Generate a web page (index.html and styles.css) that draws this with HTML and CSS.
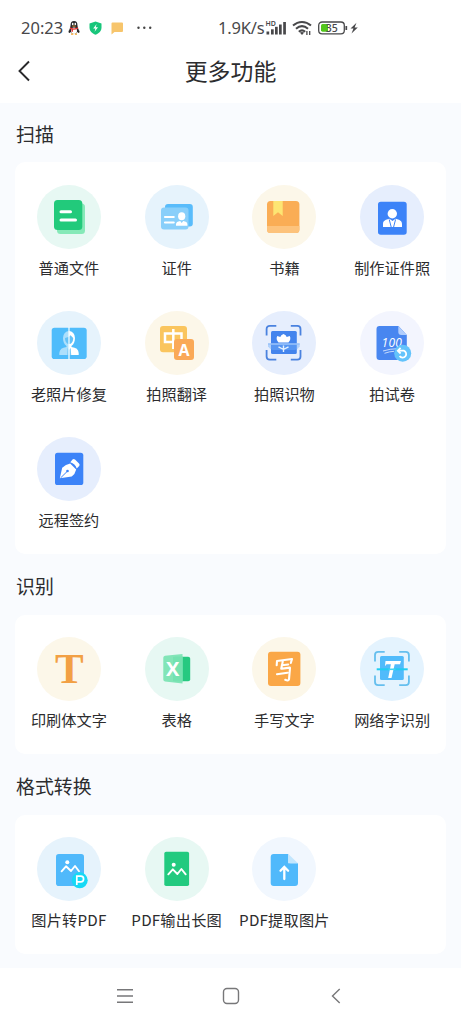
FILE: index.html
```html
<!DOCTYPE html>
<html lang="zh-CN">
<head>
<meta charset="utf-8">
<meta name="viewport" content="width=device-width, initial-scale=1">
<title>更多功能</title>
<link rel="stylesheet" href="styles.css">
</head>
<body>
<div class="screen">
  <div class="status">
    <span class="clock">20:23</span>
    <svg class="tray" width="90" height="16" viewBox="0 0 90 16">
      <path d="M2 9.500C.8 11 .7 13 1.500 12.500L3 11M10 9.500c1.300 1.500 1.400 3.500.6 3L9 11" fill="#222" stroke="#222" stroke-width="1"/>
      <ellipse cx="6" cy="9.500" rx="4.400" ry="4.600" fill="#292a2d"/>
      <ellipse cx="6" cy="5.300" rx="3.500" ry="4.300" fill="#292a2d"/>
      <ellipse cx="6" cy="10.800" rx="3" ry="3.300" fill="#fff"/>
      <ellipse cx="4.700" cy="4" rx=".8" ry="1.200" fill="#fff"/><ellipse cx="7.300" cy="4" rx=".8" ry="1.200" fill="#fff"/>
      <path d="M4 5.900q2-.6 4 0-2 1.300-4 0" fill="#f6a52c"/>
      <path d="M3 14.200h2.300M6.900 14.200H9" stroke="#f6a52c" stroke-width="1.300"/>
      <path d="M2 7.300q4 2.200 8 0v1.500q-3 1.300-5 1v2H3.500V9.500L2 8.900z" fill="#e43936"/>
      <path d="M27.500 1.500l6 2v4c0 3.500-2.500 5.800-6 7.200-3.500-1.400-6-3.700-6-7.200v-4z" fill="#18c67b"/>
      <path d="M28.600 4l-3.400 4.400h2.200l-.8 3.300 3.400-4.500h-2.300z" fill="#fff"/>
      <path d="M44.500 2.500H54a1 1 0 0 1 1 1V11a1 1 0 0 1-1 1h-7.500l-3 2.400V3.500a1 1 0 0 1 1-1z" fill="#f7c56c"/>
      <g fill="#444"><circle cx="70.500" cy="7.800" r="1.200"/><circle cx="76.300" cy="7.800" r="1.200"/><circle cx="82.200" cy="7.800" r="1.200"/></g>
    </svg>
    <span class="speed">1.9K/s</span>
    <svg class="radio" width="98" height="16" viewBox="0 0 98 16">
      <text x=".5" y="6" class="hd">HD</text>
      <g fill="#48484a"><rect x="1.500" y="11.500" width="2.700" height="3"/><rect x="6" y="9.300" width="2.700" height="5.200"/><rect x="10" y="6.800" width="2.700" height="7.700"/><rect x="14" y="4.500" width="2.700" height="10"/><rect x="18.200" y="2" width="2.700" height="12.500"/></g>
      <g fill="none" stroke="#48484a" stroke-width="2"><path d="M28 5.600c5.500-4.900 12.500-4.900 18 0M31 8.800c3.700-3.300 8.300-3.300 12 0M33.800 11.700q3.200-2.600 6.400 0"/></g>
      <path d="M34.800 12.600q2.200-1.400 4.400 0L37 15z" fill="#48484a"/>
      <path d="M41.900 15v-4M44.700 11v4" stroke="#48484a" stroke-width="1.300"/>
      <rect x="53.700" y="2" width="25.600" height="11.800" rx="3.400" fill="#fff" stroke="#48484a" stroke-width="1.300"/>
      <path d="M57.500 4H63v7.800h-5.500A1.700 1.700 0 0 1 56 10.200V5.600A1.700 1.700 0 0 1 57.500 4z" fill="#52c51b"/>
      <path d="M81.300 6v4" stroke="#48484a" stroke-width="1.700"/>
      <text x="60.800" y="11.500" class="level">35</text>
      <path d="M91.500 2.800l-6 5.700h3l-2 5 6.300-6h-3.200z" fill="#48484a"/>
    </svg>
  </div>

  <header class="header">
    <svg class="back" width="14" height="22" viewBox="0 0 14 22"><path d="M12 1.500L2.500 11l9.500 9.500" fill="none" stroke="#29292b" stroke-width="1.900"/></svg>
    <h1>更多功能</h1>
  </header>

  <main class="content">
    <h2>扫描</h2>
    <section class="card card-scan">
      <div class="item">
        <svg class="icon" viewBox="0 0 64 64"><circle cx="32" cy="32" r="32" fill="#e7f8f3"/>
          <rect x="20" y="18.500" width="28" height="30.500" rx="3.500" fill="#86e9b8"/><rect x="17" y="15" width="28.300" height="30" rx="3.500" fill="#22ca7b"/>
          <path d="M24 26.700h9.500M24 35h14.500" stroke="#fff" stroke-width="3" stroke-linecap="round"/></svg>
        <span>普通文件</span>
      </div>
      <div class="item">
        <svg class="icon" viewBox="0 0 64 64"><circle cx="32" cy="32" r="32" fill="#e6f3fc"/>
          <rect x="20" y="19" width="27.800" height="22.500" rx="3" fill="#59bcfb"/><rect x="16" y="22.500" width="27.500" height="22" rx="3" fill="#89cffa"/>
          <path d="M20 32h8.700M20 37.500h8.700" stroke="#fff" stroke-width="2.200" stroke-linecap="round"/>
          <ellipse cx="36.700" cy="31.300" rx="3.600" ry="4" fill="#fff"/><path d="M31 40.800v-1.500q.2-2.800 4.200-3.300l1.500 2 1.500-2q4 .5 4.200 3.300v1.500z" fill="#fff"/></svg>
        <span>证件</span>
      </div>
      <div class="item">
        <svg class="icon" viewBox="0 0 64 64"><circle cx="32" cy="32" r="32" fill="#fcf7e9"/>
          <rect x="15" y="16" width="32.400" height="32" rx="3.500" fill="#faad55"/><path d="M15 41h32.400v3.500a3.500 3.500 0 0 1-3.500 3.500H18.500a3.500 3.500 0 0 1-3.500-3.500z" fill="#fdc37c"/>
          <path d="M21.300 16h9.400v15L26 27.200 21.300 31z" fill="#fde573"/></svg>
        <span>书籍</span>
      </div>
      <div class="item">
        <svg class="icon" viewBox="0 0 64 64"><circle cx="32" cy="32" r="32" fill="#e6eefd"/>
          <rect x="18" y="16.800" width="28.700" height="33" rx="2.800" fill="#3c83f8"/><circle cx="32.300" cy="28.800" r="4.700" fill="#fff"/>
          <path d="M23 42v-3c0-3.500 3-4.500 6.500-5.300L32.500 36l3-2.300C39 34.500 42 35.500 42 39v3z" fill="#fff"/><path d="M29.200 34.400l2 7.600M35.600 34.400l-2 7.600" stroke="#3c83f8" stroke-width="1"/></svg>
        <span>制作证件照</span>
      </div>
      <div class="item">
        <svg class="icon" viewBox="0 0 64 64"><circle cx="32" cy="32" r="32" fill="#e6f3fc"/>
          <rect x="14.700" y="16.700" width="35" height="31.300" rx="2.800" fill="#4fbcfb"/>
          <path d="M32 20a6 7 0 0 0-6 7c0 3 1 6.500 3.500 8v1q-6.800.7-7.200 6v2H32z" fill="#acdffc"/><path d="M32 20a6 7 0 0 1 6 7c0 3-1 6.500-3.500 8v1q7 .7 7.200 6v2H32z" fill="#fff"/>
          <path d="M28 27q4-.5 5.500-2.800L36.200 27c0 8-8 8-8.200 0z" fill="#65c2f7"/><path d="M30.500 37l1.500 2 1.700-2 .5 7h-4z" fill="#78c9f8"/>
          <path d="M32 16v33" stroke="#eefaff" stroke-width="1.300"/></svg>
        <span>老照片修复</span>
      </div>
      <div class="item">
        <svg class="icon" viewBox="0 0 64 64"><circle cx="32" cy="32" r="32" fill="#fcf7e9"/>
          <rect x="15" y="15" width="27" height="26.300" rx="3" fill="#fac55e"/><path d="M20 22.500h16.500v8.500H20zM28.300 18v20" fill="none" stroke="#fff" stroke-width="2.500"/>
          <rect x="29" y="28" width="20" height="21" rx="3" fill="#faa957"/><text x="39" y="44.500" class="letter-a">A</text></svg>
        <span>拍照翻译</span>
      </div>
      <div class="item">
        <svg class="icon" viewBox="0 0 64 64"><circle cx="32" cy="32" r="32" fill="#e6eefd"/>
          <path d="M14.600 24.500V18a3.200 3.200 0 0 1 3.200-3.200h6.500M38.800 14.800h6.500a3.200 3.200 0 0 1 3.200 3.200v6.500M48.500 39v6.500a3.200 3.200 0 0 1-3.200 3.200h-6.500M24.300 48.700h-6.500a3.200 3.200 0 0 1-3.200-3.200V39" fill="none" stroke="#4a82df" stroke-width="1.800"/>
          <rect x="19" y="20" width="25.800" height="23" rx="1.500" fill="#4384ed"/>
          <path d="M26.500 31.500q-3-3.500-1.200-6.500l3 1q.5-2 3.200-3 2.700 1 3.200 3l3-1q1.800 3-1.200 6.500z" fill="#fff"/>
          <path d="M16 33h31.700v2.500q-2 3-5 3.500H21q-3-.5-5-3.500z" fill="#70acf8" opacity=".45"/><path d="M16 33h31.700" stroke="#99c2f9" stroke-width="1.600"/>
          <path d="M31.500 34.500V41M31.500 38.500l-5-2.700M31.500 38.500l5-2.700" stroke="#e5f1ff" stroke-width="1.400"/></svg>
        <span>拍照识物</span>
      </div>
      <div class="item">
        <svg class="icon" viewBox="0 0 64 64"><circle cx="32" cy="32" r="32" fill="#f3f5fe"/>
          <path d="M19.500 15h19l8.300 9v22a3 3 0 0 1-3 3H19.500a3 3 0 0 1-3-3V18a3 3 0 0 1 3-3z" fill="#4886f0"/><path d="M38.300 15v6a3 3 0 0 0 3 3h5.500z" fill="#b1cdfc"/>
          <text x="21.500" y="35.500" class="score">100</text><path d="M23 40q7-2.300 15-2.300M24.500 42.300q5-1.800 9.500-2" stroke="#e8f1ff" stroke-width=".8" fill="none"/>
          <circle cx="42.700" cy="42.300" r="8.500" fill="#63c3fb"/><path d="M38.300 39.700h5.500a3.600 3.600 0 1 1-4.200 5.400M40.600 36.900l-2.800 2.800 2.800 2.800" fill="none" stroke="#fff" stroke-width="1.800"/></svg>
        <span>拍试卷</span>
      </div>
      <div class="item">
        <svg class="icon" viewBox="0 0 64 64"><circle cx="32" cy="32" r="32" fill="#e6eefd"/>
          <rect x="18" y="15.800" width="28.300" height="32.200" rx="2.600" fill="#3c83f8"/>
          <path d="M22.800 41.300l2.400-10.500q3.500-3.500 8-4.300l6 6q-1 4.500-4.500 7z" fill="#fff"/><path d="M33.300 25.200l2.200-2.700q1.200-1.200 2.500 0l4 4q1.200 1.200.2 2.500l-2.500 2.500q-1.500-4.800-6.400-6.300z" fill="#fff"/>
          <path d="M23.500 41l6.500-6.400" stroke="#3c83f8" stroke-width="1"/><circle cx="30.500" cy="34" r="1.300" fill="#3c83f8"/></svg>
        <span>远程签约</span>
      </div>
    </section>

    <h2>识别</h2>
    <section class="card">
      <div class="item">
        <svg class="icon" viewBox="0 0 64 64"><circle cx="32" cy="32" r="32" fill="#fcf7e9"/><text x="32.300" y="46" class="serif-t">T</text></svg>
        <span>印刷体文字</span>
      </div>
      <div class="item">
        <svg class="icon" viewBox="0 0 64 64"><circle cx="32" cy="32" r="32" fill="#e7f8f3"/>
          <rect x="28" y="19.800" width="17.200" height="24.400" rx="2" fill="#26c980"/><path d="M28 19.800h10v24.400H28z" fill="#5bdca2"/>
          <path d="M18.300 20.800a2 2 0 0 1 1.700-2L37.500 17v29.500L20 44.500a2 2 0 0 1-1.700-2z" fill="#77e2b0" opacity=".9"/><text x="27.700" y="39" class="letter-x">X</text></svg>
        <span>表格</span>
      </div>
      <div class="item">
        <svg class="icon" viewBox="0 0 64 64"><circle cx="32" cy="32" r="32" fill="#fcf7e9"/>
          <rect x="16" y="14.800" width="32.400" height="34.200" rx="3" fill="#faa747"/>
          <path d="M24.700 28.300L25 24l15-2-1.200 4M30.800 24.500l-1.600 7.300 8.600-1.300M29.800 28.300l6.400-.8M25 37.200l10.500-1.500M30 31.800l8-1-1 11.500q-.4 2-3.800.5" fill="none" stroke="#fff" stroke-width="2.100" stroke-linejoin="round" stroke-linecap="round"/></svg>
        <span>手写文字</span>
      </div>
      <div class="item">
        <svg class="icon" viewBox="0 0 64 64"><circle cx="32" cy="32" r="32" fill="#e4f3fe"/>
          <path d="M15 24.500V18a3.200 3.200 0 0 1 3.200-3.200h6.500M39.200 14.800h6.500a3.200 3.200 0 0 1 3.200 3.200v6.500M48.900 38.500V45a3.200 3.200 0 0 1-3.200 3.200h-6.500M24.700 48.200h-6.500A3.200 3.200 0 0 1 15 45v-6.500" fill="none" stroke="#65bfee" stroke-width="1.800"/>
          <rect x="20" y="19" width="23.800" height="24" rx="1.500" fill="#51bbfb"/><path d="M16.700 32.300h31" stroke="#20cdf2" stroke-width="2"/>
          <path d="M25.500 24H41l-1 3.200h-5.300L31.500 41h-3.300l2.700-13.800h-4.400l-1.500 2z" fill="#fff"/><path d="M28.500 32.300h7" stroke="#42d3f3" stroke-width="1.600"/></svg>
        <span>网络字识别</span>
      </div>
    </section>

    <h2>格式转换</h2>
    <section class="card">
      <div class="item">
        <svg class="icon" viewBox="0 0 64 64"><circle cx="32" cy="32" r="32" fill="#e6f3fc"/>
          <rect x="19" y="17" width="28" height="32" rx="2.800" fill="#50b9fb"/><circle cx="30.300" cy="25.200" r="2" fill="#fff"/>
          <path d="M24.600 34.300l4.400-5 5 4.700 4-5 4 5.300" fill="none" stroke="#fff" stroke-width="1.900" stroke-linejoin="round" stroke-linecap="round"/>
          <circle cx="42.700" cy="43.300" r="8" fill="#16d9f5"/><path d="M39.800 48v-8.800h4a2.800 2.800 0 0 1 0 5.600h-4" fill="none" stroke="#fff" stroke-width="1.700"/></svg>
        <span class="latin">图片转PDF</span>
      </div>
      <div class="item">
        <svg class="icon" viewBox="0 0 64 64"><circle cx="32" cy="32" r="32" fill="#e7f8f3"/>
          <rect x="19.300" y="14.800" width="24.800" height="34.200" rx="1.800" fill="#22ca7f"/><circle cx="28.700" cy="27.700" r="2" fill="#fff"/>
          <path d="M23.300 37.300l4.500-5 4.600 4.700 4-5 4.300 5.300" fill="none" stroke="#fff" stroke-width="1.900" stroke-linejoin="round" stroke-linecap="round"/></svg>
        <span class="latin">PDF输出长图</span>
      </div>
      <div class="item">
        <svg class="icon" viewBox="0 0 64 64"><circle cx="32" cy="32" r="32" fill="#f1f7fe"/>
          <path d="M21.700 17h14.600v9.300H46V46a3 3 0 0 1-3 3H21.700a3 3 0 0 1-3-3V20a3 3 0 0 1 3-3z" fill="#50b9fb"/><path d="M36.300 17l9.700 9.300h-7.300a2.400 2.400 0 0 1-2.400-2.400z" fill="#c3e6fd"/>
          <path d="M32.300 42V30.500M28.500 33.700l3.800-3.800 3.800 3.800" fill="none" stroke="#fff" stroke-width="2.300" stroke-linecap="round"/></svg>
        <span class="latin">PDF提取图片</span>
      </div>
    </section>
  </main>

  <nav class="navbar">
    <svg width="18" height="18" viewBox="0 0 18 18"><path d="M1 2.700h16M1 9h16M1 15.200h16"/></svg>
    <svg width="18" height="18" viewBox="0 0 18 18"><rect x="1.500" y="1.500" width="15" height="15" rx="3.500"/></svg>
    <svg width="18" height="18" viewBox="0 0 18 18"><path d="M12.700 2L5.500 9l7.200 7"/></svg>
  </nav>
</div>
</body>
</html>
```
FILE: styles.css
```css
* { box-sizing: border-box; }
body {
  margin: 0;
  background: #fff;
  color: #2c2c2e;
  font-family: "Noto Sans CJK SC", "Noto Sans", sans-serif;
}
.screen {
  width: 461px;
  height: 1024px;
  display: flex;
  flex-direction: column;
  overflow: hidden;
}
.status {
  height: 42px;
  flex: none;
  display: flex;
  align-items: center;
  padding: 13px 0 0 21px;
  font-family: "Noto Sans", sans-serif;
  font-size: 16.5px;
  line-height: 20px;
  color: #48484a;
}
.clock { width: 47px; }
.speed { width: 48px; margin-left: 60px; letter-spacing: -0.2px; }
.tray, .radio { flex: none; }
.radio { margin-left: -1px; }
.hd { font: 600 7px "Noto Sans", sans-serif; fill: #48484a; }
.level { font: 500 10.5px "Noto Sans", sans-serif; fill: #48484a; }
.header {
  height: 61px;
  flex: none;
  display: grid;
  grid-template-columns: 60px 1fr 60px;
  align-items: center;
  padding-bottom: 4px;
}
.back { margin: 1px 0 0 17px; }
h1 {
  margin: 0;
  text-align: center;
  font-size: 22.9px;
  line-height: 31px;
  font-weight: 400;
}
.content {
  height: 865px;
  flex: none;
  padding: 0 15px;
  background: #f9fbfe;
}
h2 {
  margin: 0;
  padding-left: 1px;
  height: 61px;
  font-size: 18.9px;
  line-height: 63px;
  font-weight: 400;
}
h2:first-child { height: 59px; line-height: 61px; }
.card {
  height: 139px;
  display: grid;
  grid-template-columns: repeat(4, 1fr);
  grid-auto-rows: 126px;
  padding-top: 22px;
  border-radius: 10px;
  background: #fff;
}
.card-scan { height: 392px; padding-top: 23px; }
.item {
  display: flex;
  flex-direction: column;
  align-items: center;
  gap: 7px;
  font-size: 15.2px;
  line-height: 22px;
  white-space: nowrap;
}
.latin { letter-spacing: 0.2px; }
.icon { width: 64px; height: 64px; flex: none; }
.letter-a { font: bold 16px "Open Sans", sans-serif; fill: #fff; text-anchor: middle; }
.letter-x { font: bold 20px "Open Sans", sans-serif; fill: #fff; text-anchor: middle; }
.score { font: italic 500 12px "Open Sans", sans-serif; fill: #fff; letter-spacing: 0.3px; }
.serif-t { font: bold 43px "Liberation Serif", serif; fill: #f2a044; text-anchor: middle; }
.navbar {
  flex: 1;
  display: flex;
  justify-content: center;
  align-items: center;
  gap: 87.5px;
}
.navbar svg { fill: none; stroke: #777779; stroke-width: 1.4; }
```
